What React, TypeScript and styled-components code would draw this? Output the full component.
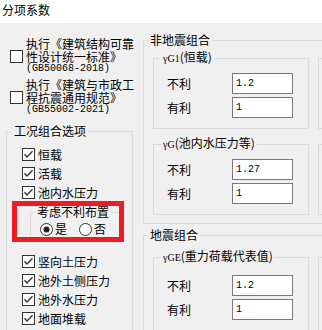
import React from 'react'
import styled, {createGlobalStyle} from 'styled-components'

const GlobalStyle = createGlobalStyle`
  html, body {
    margin: 0;
    padding: 0;
    background: #f0f0f0;
    overflow: hidden;
  }
  body {
    font-family: "Noto Sans CJK SC", "Noto Sans", sans-serif;
    font-size: 12px;
    color: #000;
  }
`

const Window = styled.div`
  width: 520px;
  height: 330px;
  background: #f0f0f0;
  overflow: hidden;
`

const TitleBar = styled.div`
  height: 23px;
  box-sizing: border-box;
  background: #fff;
  padding: 3px 0 0 2px;
  font-size: 12px;
  line-height: 14px;
`

const Body = styled.div`
  display: flex;
  align-items: flex-start;
  gap: 10px;
  padding-left: 6px;
`

const LeftCol = styled.div`
  width: 127px;
  flex: none;
  padding-top: 14px;
  display: flex;
  flex-direction: column;
`

const RightCol = styled.div`
  flex: none;
  padding-top: 10px;
  display: flex;
  flex-direction: column;
  gap: 4px;
`

const StdItem = styled.div`
  display: flex;
  align-items: center;
  gap: 3px;
  padding-left: 4px;
  & + & {
    margin-top: 3px;
  }
`

const StdText = styled.div`
  display: flex;
  flex-direction: column;
`

const StdLine = styled.span`
  line-height: 13px;
  white-space: nowrap;
`

const StdCode = styled.span`
  font-family: "Liberation Mono", monospace;
  font-size: 10px;
  line-height: 12px;
`

const Group = styled.fieldset<{$top?: number}>`
  margin: ${p => p.$top ?? 0}px 0 0 0;
  padding: 0;
  border: 1px solid #dcdcdc;
  min-width: 0;
`

const Legend = styled.legend<{$indent: number; $lh?: number}>`
  margin-left: ${p => p.$indent}px;
  padding: 0 2px;
  font-size: 12px;
  line-height: ${p => p.$lh ?? 14}px;
  white-space: nowrap;
`

const Sym = styled.span`
  font-family: "Liberation Serif", serif;
  font-size: 10px;
`

const OptionsBody = styled.div`
  padding: 7px 0 14px 15px;
  display: flex;
  flex-direction: column;
`

const CheckRow = styled.div`
  height: 19px;
  display: flex;
  align-items: center;
  gap: 3px;
  line-height: 14px;
  white-space: nowrap;
`

const Highlight = styled.div`
  box-sizing: border-box;
  width: 112px;
  height: 41px;
  margin: -1px 0 10px -10px;
  border: 5px solid #ed1c24;
  overflow: hidden;
`

const RadioGroup = styled.fieldset`
  margin: 0 0 0 13px;
  padding: 0;
  border: 1px solid #dcdcdc;
  border-right: none;
  border-bottom: none;
  min-width: 0;
  height: 40px;
`

const RadioRow = styled.div`
  display: flex;
  align-items: center;
  gap: 12px;
  padding: 4px 0 0 9px;
`

const RadioItem = styled.span`
  display: flex;
  align-items: center;
  gap: 2px;
  line-height: 14px;
`

const OuterBody = styled.div<{$top: number}>`
  display: grid;
  grid-template-columns: 156px 156px;
  column-gap: 9px;
  row-gap: 7px;
  padding: ${p => p.$top}px 9px 8px 9px;
`

const FactorBody = styled.div<{$top: number; $bottom: number}>`
  display: grid;
  grid-template-columns: 65px 61px;
  row-gap: 3px;
  align-items: center;
  padding: ${p => p.$top}px 0 ${p => p.$bottom}px 13px;
`

const FactorLabel = styled.span`
  line-height: 14px;
`

const Field = styled.input`
  width: 61px;
  height: 21px;
  box-sizing: border-box;
  margin: 0;
  padding: 0 0 0 3px;
  border: 1px solid #7a7a7a;
  background: #fff;
  font-family: "Liberation Mono", monospace;
  font-size: 10px;
  color: #000;
  outline: none;
`

const CheckBox = ({on}: {on: boolean}) => (
  <svg width="13" height="13" viewBox="0 0 13 13" style={{flex: 'none'}}>
    <rect x="0.5" y="0.5" width="12" height="12" fill="#fff" stroke="#333" />
    {on && <path d="M2.5 6.2 L5 9 L10.5 3.2" fill="none" stroke="#333" strokeWidth="1.3" />}
  </svg>
)

const Radio = ({on}: {on: boolean}) => (
  <svg width="13" height="13" viewBox="0 0 13 13" style={{flex: 'none'}}>
    <circle cx="6.5" cy="6.5" r="6" fill="#fff" stroke="#333" />
    {on && <circle cx="6.5" cy="6.5" r="3" fill="#222" />}
  </svg>
)

interface IFactor {
  sym: string
  name: string
  fav: string
  unfav: string
  top?: number
  bottom?: number
}

const FactorBox: React.FC<IFactor> = ({sym, name, fav, unfav, top = 7, bottom = 10}) => (
  <Group>
    <Legend $indent={7}>
      <Sym>{sym}</Sym>({name})
    </Legend>
    <FactorBody $top={top} $bottom={bottom}>
      <FactorLabel>不利</FactorLabel>
      <Field readOnly defaultValue={unfav} />
      <FactorLabel>有利</FactorLabel>
      <Field readOnly defaultValue={fav} />
    </FactorBody>
  </Group>
)

const upperLoads = ['恒载', '活载', '池内水压力']
const lowerLoads = ['竖向土压力', '池外土侧压力', '池外水压力', '地面堆载']

export default function App() {
  return (
    <Window>
      <GlobalStyle />
      <TitleBar>分项系数</TitleBar>
      <Body>
        <LeftCol>
          <StdItem>
            <CheckBox on={false} />
            <StdText>
              <StdLine>执行《建筑结构可靠</StdLine>
              <StdLine>性设计统一标准》</StdLine>
              <StdCode>(GB50068-2018)</StdCode>
            </StdText>
          </StdItem>
          <StdItem>
            <CheckBox on={false} />
            <StdText>
              <StdLine>执行《建筑与市政工</StdLine>
              <StdLine>程抗震通用规范》</StdLine>
              <StdCode>(GB55002-2021)</StdCode>
            </StdText>
          </StdItem>
          <Group $top={8}>
            <Legend $indent={5}>工况组合选项</Legend>
            <OptionsBody>
              {upperLoads.map(t => (
                <CheckRow key={t}>
                  <CheckBox on />
                  {t}
                </CheckRow>
              ))}
              <Highlight>
                <RadioGroup>
                  <Legend $indent={4} $lh={12}>考虑不利布置</Legend>
                  <RadioRow>
                    <RadioItem><Radio on />是</RadioItem>
                    <RadioItem><Radio on={false} />否</RadioItem>
                  </RadioRow>
                </RadioGroup>
              </Highlight>
              {lowerLoads.map(t => (
                <CheckRow key={t}>
                  <CheckBox on />
                  {t}
                </CheckRow>
              ))}
            </OptionsBody>
          </Group>
        </LeftCol>
        <RightCol>
          <Group>
            <Legend $indent={4}>非地震组合</Legend>
            <OuterBody $top={3}>
              <FactorBox sym="γG1" name="恒载" unfav="1.2" fav="1" />
              <FactorBox sym="γQ1" name="活载" unfav="1.4" fav="0" />
              <FactorBox sym="γG" name="池内水压力等" unfav="1.27" fav="1" />
              <FactorBox sym="γQ" name="地面堆载" unfav="1.4" fav="0" />
            </OuterBody>
          </Group>
          <Group>
            <Legend $indent={4}>地震组合</Legend>
            <OuterBody $top={7}>
              <FactorBox sym="γGE" name="重力荷载代表值" unfav="1.2" fav="1" top={10} bottom={11} />
              <FactorBox sym="γEh" name="水平地震作用" unfav="1.3" fav="0" top={10} bottom={11} />
            </OuterBody>
          </Group>
        </RightCol>
      </Body>
    </Window>
  )
}
